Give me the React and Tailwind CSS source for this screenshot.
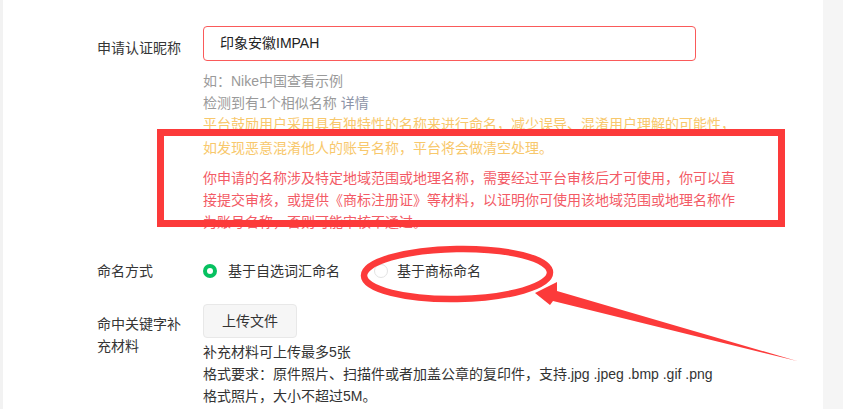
import React from "react";

export default function App() {
  return (
    <div
      className="relative flex h-[409px] w-[843px] overflow-hidden bg-white text-[14px] text-[#353535]"
      style={{ fontFamily: '"Liberation Sans", "Noto Sans CJK SC", sans-serif' }}
    >
      <div className="w-[3px] shrink-0 bg-[#f2f2f2]" />
      <div className="flex-1 pl-[94px] pt-[26px]">
        {/* Row 1 */}
        <div className="flex">
          <div className="w-[106px] shrink-0 pt-[11px] leading-[22px]">申请认证昵称</div>
          <div className="w-[540px]">
            <div className="flex h-[35px] w-[493px] items-center rounded-[4px] border border-[#fa5a5a] px-[16px] text-[#222]">
              印象安徽IMPAH
            </div>
            <div className="mt-[9px] leading-[22px] text-[#9a9a9a]">
              <div>如：Nike中国查看示例</div>
              <div>
                检测到有1个相似名称 <span className="text-[#8d94a8]">详情</span>
              </div>
            </div>
            <div className="-mt-[2px] whitespace-nowrap leading-[24px] text-[#f8c86c]">
              平台鼓励用户采用具有独特性的名称来进行命名，减少误导、混淆用户理解的可能性，
              <br />
              如发现恶意混淆他人的账号名称，平台将会做清空处理。
            </div>
            <div className="mt-[7px] whitespace-nowrap leading-[22px] text-[#f35b66]">
              你申请的名称涉及特定地域范围或地理名称，需要经过平台审核后才可使用，你可以直
              <br />
              接提交审核，或提供《商标注册证》等材料，以证明你可使用该地域范围或地理名称作
              <br />
              为账号名称，否则可能审核不通过。
            </div>
          </div>
        </div>

        {/* Row 2 */}
        <div className="mt-[27px] flex h-[22px] items-center">
          <div className="w-[106px] shrink-0 leading-[22px]">命名方式</div>
          <div className="flex items-center">
            <span className="flex h-[14px] w-[14px] items-center justify-center rounded-full bg-[#07c160]">
              <span className="h-[6px] w-[6px] rounded-full bg-white" />
            </span>
            <span className="ml-[11px] text-[#333]">基于自选词汇命名</span>
            <span className="ml-[34px] h-[14px] w-[14px] rounded-full border border-[#e3e3e3] bg-white" />
            <span className="ml-[9px] text-[#333]">基于商标命名</span>
          </div>
        </div>

        {/* Row 3 */}
        <div className="mt-[22px] flex">
          <div className="w-[106px] shrink-0 pt-[9px] leading-[22px]">
            命中关键字补
            <br />
            充材料
          </div>
          <div>
            <div className="flex h-[34px] w-[94px] items-center justify-center rounded-[4px] border border-[#e8e8e8] bg-[#f6f6f6] text-[#333]">
              上传文件
            </div>
            <div className="mt-[3px] whitespace-nowrap leading-[22px] text-[#333]">
              <div>补充材料可上传最多5张</div>
              <div>格式要求：原件照片、扫描件或者加盖公章的复印件，支持.jpg .jpeg .bmp .gif .png</div>
              <div>格式照片，大小不超过5M。</div>
            </div>
          </div>
        </div>
      </div>
      <div className="w-[20px] shrink-0 bg-[#f5f5f5]" />

      {/* Annotation: red rectangle */}
      <div className="pointer-events-none absolute left-[157px] top-[129px] h-[98px] w-[628px] border-[7px] border-[#fc3a3a]" />

      {/* Annotation: ellipse + arrow */}
      <svg
        className="pointer-events-none absolute left-0 top-0"
        width="843"
        height="409"
        viewBox="0 0 843 409"
      >
        <ellipse
          cx="457"
          cy="274"
          rx="93"
          ry="25"
          fill="none"
          stroke="#fc3a3a"
          strokeWidth="6.5"
          transform="rotate(-1 457 274)"
        />
        <polygon
          points="535,293 557,282 557,291 797,361 553,301 550,305"
          fill="#fc3a3a"
        />
      </svg>
    </div>
  );
}
